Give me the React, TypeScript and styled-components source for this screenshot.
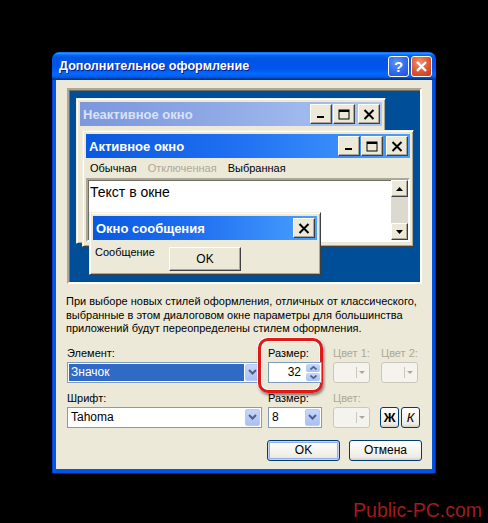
import styled, { createGlobalStyle, css } from "styled-components";

const GlobalStyle = createGlobalStyle`
  html, body {
    margin: 0;
    padding: 0;
    background: #000;
  }
  body {
    font-family: "Liberation Sans", Arial, sans-serif;
    font-size: 11px;
    color: #000;
  }
`;

function Chevron() {
  return (
    <svg width="9" height="6" viewBox="0 0 9 6">
      <path d="M1 1 L4.5 4.5 L8 1" fill="none" stroke="#4d6185" strokeWidth="2" />
    </svg>
  );
}

function Glyph({ kind }: { kind: "min" | "max" | "close" | "up" | "down" }) {
  if (kind === "min")
    return (
      <svg width="10" height="10" viewBox="0 0 10 10">
        <rect x="1" y="7" width="7" height="2" fill="#000" />
      </svg>
    );
  if (kind === "max")
    return (
      <svg width="12" height="11" viewBox="0 0 12 11">
        <rect x="1" y="1" width="10" height="9" fill="none" stroke="#000" strokeWidth="1" />
        <rect x="1" y="1" width="10" height="2" fill="#000" />
      </svg>
    );
  if (kind === "close")
    return (
      <svg width="12" height="11" viewBox="0 0 12 11">
        <path d="M1.5 1 L10.5 10 M10.5 1 L1.5 10" stroke="#000" strokeWidth="2" />
      </svg>
    );
  if (kind === "up")
    return (
      <svg width="7" height="4" viewBox="0 0 7 4">
        <path d="M0 4 L3.5 0 L7 4 Z" fill="#000" />
      </svg>
    );
  return (
    <svg width="7" height="4" viewBox="0 0 7 4">
      <path d="M0 0 L3.5 4 L7 0 Z" fill="#000" />
    </svg>
  );
}

export default function App() {
  return (
    <Page>
      <GlobalStyle />
      <Dialog>
        <TitleBar>
          <TitleText>Дополнительное оформление</TitleText>
          <TitleButtons>
            <HelpButton>?</HelpButton>
            <CloseButton>
              <svg width="13" height="13" viewBox="0 0 13 13">
                <path d="M2 2 L11 11 M11 2 L2 11" stroke="#fff" strokeWidth="2.4" />
              </svg>
            </CloseButton>
          </TitleButtons>
        </TitleBar>

        <Body>
          <Desk>
            <MiniWindow $left={7} $top={8} $width={310} $height={146}>
              <MiniTitle $active={false}>
                <span>Неактивное окно</span>
                <CapGroup>
                  <CapButton><Glyph kind="min" /></CapButton>
                  <CapButton><Glyph kind="max" /></CapButton>
                  <CapButton $gap><Glyph kind="close" /></CapButton>
                </CapGroup>
              </MiniTitle>
            </MiniWindow>

            <MiniWindow $left={13} $top={40} $width={332} $height={117}>
              <MiniTitle $active>
                <span>Активное окно</span>
                <CapGroup>
                  <CapButton><Glyph kind="min" /></CapButton>
                  <CapButton><Glyph kind="max" /></CapButton>
                  <CapButton $gap><Glyph kind="close" /></CapButton>
                </CapGroup>
              </MiniTitle>
              <MenuBar>
                <MenuItem>Обычная</MenuItem>
                <MenuItem $disabled>Отключенная</MenuItem>
                <MenuItem>Выбранная</MenuItem>
              </MenuBar>
              <TextPane>
                <PaneText>Текст в окне</PaneText>
                <ScrollBar>
                  <ScrollArrow><Glyph kind="up" /></ScrollArrow>
                  <ScrollArrow><Glyph kind="down" /></ScrollArrow>
                </ScrollBar>
              </TextPane>
            </MiniWindow>

            <MiniWindow $left={20} $top={122} $width={232} $height={63}>
              <MiniTitle $active>
                <span>Окно сообщения</span>
                <CapGroup>
                  <CapButton $gap><Glyph kind="close" /></CapButton>
                </CapGroup>
              </MiniTitle>
              <MessageBody>
                <span>Сообщение</span>
                <MiniOk>OK</MiniOk>
              </MessageBody>
            </MiniWindow>
          </Desk>

          <Note>
            При выборе новых стилей оформления, отличных от классического,
            <br />
            выбранные в этом диалоговом окне параметры для большинства
            <br />
            приложений будут переопределены стилем оформления.
          </Note>

          <FieldRow>
            <Field $w={195}>
              <Label>Элемент:</Label>
              <Combo>
                <ComboValue $selected>Значок</ComboValue>
                <ComboArrow><Chevron /></ComboArrow>
              </Combo>
            </Field>
            <Field $w={54} $ml={6}>
              <Highlight />
              <Label>Размер:</Label>
              <Combo>
                <SpinValue>32</SpinValue>
                <SpinArrows>
                  <SpinArrow>
                    <svg width="7" height="4" viewBox="0 0 7 4">
                      <path d="M0.5 3.5 L3.5 0.8 L6.5 3.5" fill="none" stroke="#4d6185" strokeWidth="1.6" />
                    </svg>
                  </SpinArrow>
                  <SpinArrow>
                    <svg width="7" height="4" viewBox="0 0 7 4">
                      <path d="M0.5 0.5 L3.5 3.2 L6.5 0.5" fill="none" stroke="#4d6185" strokeWidth="1.6" />
                    </svg>
                  </SpinArrow>
                </SpinArrows>
              </Combo>
            </Field>
            <Field $w={37} $ml={11}>
              <Label $disabled>Цвет 1:</Label>
              <ColorPick />
            </Field>
            <Field $w={37} $ml={11}>
              <Label $disabled>Цвет 2:</Label>
              <ColorPick />
            </Field>
          </FieldRow>

          <FieldRow $second>
            <Field $w={195}>
              <Label>Шрифт:</Label>
              <Combo>
                <ComboValue>Tahoma</ComboValue>
                <ComboArrow><Chevron /></ComboArrow>
              </Combo>
            </Field>
            <Field $w={54} $ml={6}>
              <Label>Размер:</Label>
              <Combo>
                <ComboValue>8</ComboValue>
                <ComboArrow><Chevron /></ComboArrow>
              </Combo>
            </Field>
            <Field $w={37} $ml={11}>
              <Label $disabled>Цвет:</Label>
              <ColorPick />
            </Field>
            <StyleButton $ml={10} $bold>Ж</StyleButton>
            <StyleButton $ml={2} $italic>К</StyleButton>
          </FieldRow>

          <ButtonRow>
            <PushButton $default>OK</PushButton>
            <PushButton>Отмена</PushButton>
          </ButtonRow>
        </Body>
      </Dialog>
      <Watermark>Public-PC.com</Watermark>
    </Page>
  );
}

const Page = styled.div`
  width: 488px;
  height: 523px;
  box-sizing: border-box;
  padding: 52px 0 0 52px;
  display: flex;
  flex-direction: column;
  overflow: hidden;
  background: #000;
`;

const Dialog = styled.div`
  width: 384px;
  box-sizing: border-box;
  background: linear-gradient(to right, #0019b8 0, #0a5ae6 1px, #0055e5 4px, #0055e5 calc(100% - 4px), #0a48d0 calc(100% - 1px), #00138c 100%);
  border-radius: 8px 8px 0 0;
  border-bottom: 1px solid #00138c;
  display: flex;
  flex-direction: column;
`;

const TitleBar = styled.div`
  height: 28px;
  display: flex;
  align-items: center;
  justify-content: space-between;
  padding: 0 4px 0 7px;
  border-radius: 8px 8px 0 0;
  background: linear-gradient(
    to bottom,
    #0058ee 0%,
    #3593ff 4%,
    #288eff 6%,
    #127dff 8%,
    #036ffc 10%,
    #0262ee 14%,
    #0057e5 20%,
    #0054e3 24%,
    #0055eb 56%,
    #005bf5 66%,
    #026afe 76%,
    #0062ef 86%,
    #0052d6 92%,
    #0040ab 94%,
    #003092 100%
  );
`;

const TitleText = styled.span`
  color: #fff;
  font-weight: bold;
  font-size: 12.6px;
  text-shadow: 1px 1px #0a1883;
`;

const TitleButtons = styled.div`
  display: flex;
  gap: 2px;
`;

const capBase = css`
  width: 21px;
  height: 21px;
  box-sizing: border-box;
  border: 1px solid #fff;
  border-radius: 3px;
  display: flex;
  align-items: center;
  justify-content: center;
`;

const HelpButton = styled.div`
  ${capBase};
  background: radial-gradient(circle at 40% 30%, #5d94ff 0%, #2f6bf0 55%, #1f4fd0 100%);
  color: #fff;
  font-weight: bold;
  font-size: 15px;
  line-height: 1;
`;

const CloseButton = styled.div`
  ${capBase};
  background: radial-gradient(circle at 40% 30%, #f09576 0%, #e0552f 55%, #c53a18 100%);
`;

const Body = styled.div`
  margin: 0 4px 4px 4px;
  background: #ece9d8;
  padding: 8px 10px 8px 11px;
  display: flex;
  flex-direction: column;
`;

const Desk = styled.div`
  position: relative;
  height: 196px;
  box-sizing: border-box;
  background: #004e98;
  border: 2px solid;
  border-color: #aca899 #fff #fff #aca899;
  box-shadow: inset 1px 1px #716f64;
  overflow: hidden;
`;

const MiniWindow = styled.div<{ $left: number; $top: number; $width: number; $height: number }>`
  position: absolute;
  left: ${(p) => p.$left}px;
  top: ${(p) => p.$top}px;
  width: ${(p) => p.$width}px;
  height: ${(p) => p.$height}px;
  box-sizing: border-box;
  background: #ece9d8;
  border: 1px solid;
  border-color: #f1efe2 #404040 #404040 #f1efe2;
  box-shadow: inset 1px 1px #fff, inset -1px -1px #aca899;
  padding: 3px;
  display: flex;
  flex-direction: column;
`;

const MiniTitle = styled.div<{ $active: boolean }>`
  height: 24px;
  flex: none;
  display: flex;
  align-items: center;
  justify-content: space-between;
  padding-left: 3px;
  font-weight: bold;
  font-size: 13px;
  color: ${(p) => (p.$active ? "#fff" : "#d8e2f7")};
  background: ${(p) =>
    p.$active
      ? "linear-gradient(to right, #0a58e0 0%, #1f6ff0 45%, #4aa0ff 100%)"
      : "linear-gradient(to right, #7c97dd 0%, #8fa9e6 45%, #aec6f3 100%)"};
`;

const CapGroup = styled.div`
  display: flex;
  gap: 1px;
  padding-right: 2px;
`;

const CapButton = styled.div<{ $gap?: boolean }>`
  width: 22px;
  height: 20px;
  box-sizing: border-box;
  margin-left: ${(p) => (p.$gap ? "2px" : "0")};
  background: #ece9d8;
  border: 1px solid;
  border-color: #fff #404040 #404040 #fff;
  box-shadow: inset -1px -1px #aca899;
  display: flex;
  align-items: center;
  justify-content: center;
`;

const MenuBar = styled.div`
  height: 20px;
  flex: none;
  display: flex;
  align-items: center;
  gap: 11px;
  padding-left: 4px;
`;

const MenuItem = styled.span<{ $disabled?: boolean }>`
  color: ${(p) => (p.$disabled ? "#aca899" : "#000")};
`;

const TextPane = styled.div`
  flex: 1;
  display: flex;
  background: #fff;
  border: 2px solid;
  border-color: #aca899 #fff #fff #aca899;
  box-shadow: inset 1px 1px #716f64;
  margin-bottom: 1px;
`;

const PaneText = styled.div`
  flex: 1;
  padding: 4px 0 0 2px;
  font-size: 14px;
`;

const ScrollBar = styled.div`
  width: 17px;
  background: #dcd9d0;
  display: flex;
  flex-direction: column;
  justify-content: space-between;
`;

const ScrollArrow = styled.div`
  height: 17px;
  box-sizing: border-box;
  background: #ece9d8;
  border: 1px solid;
  border-color: #fff #404040 #404040 #fff;
  box-shadow: inset -1px -1px #aca899;
  display: flex;
  align-items: center;
  justify-content: center;
`;

const MessageBody = styled.div`
  flex: 1;
  display: grid;
  grid-template-columns: 76px 72px;
  align-items: start;
  padding: 6px 0 0 2px;
`;

const MiniOk = styled.div`
  margin: 1px 0 0 -2px;
  width: 72px;
  height: 24px;
  box-sizing: border-box;
  display: flex;
  align-items: center;
  justify-content: center;
  background: #ece9d8;
  border: 1px solid;
  border-color: #fff #404040 #404040 #fff;
  box-shadow: inset -1px -1px #aca899;
  font-size: 12px;
`;

const Note = styled.p`
  margin: 11px 0 0 -1px;
  line-height: 13.5px;
  white-space: nowrap;
`;

const FieldRow = styled.div<{ $second?: boolean }>`
  display: flex;
  align-items: flex-end;
  margin-top: ${(p) => (p.$second ? "7px" : "9px")};
`;

const Field = styled.div<{ $w: number; $ml?: number }>`
  position: relative;
  width: ${(p) => p.$w}px;
  margin-left: ${(p) => p.$ml ?? 0}px;
  display: flex;
  flex-direction: column;
`;

const Label = styled.div<{ $disabled?: boolean }>`
  position: relative;
  height: 16px;
  line-height: 16px;
  margin-bottom: 1px;
  color: ${(p) => (p.$disabled ? "#aca899" : "#000")};
`;

const Highlight = styled.div`
  position: absolute;
  left: -10px;
  right: -1px;
  top: -7px;
  bottom: -10px;
  border: 3px solid #e01818;
  border-radius: 10px;
  box-shadow: inset 0 0 0 1px #fff, 1px 2px 3px rgba(0, 0, 0, 0.55), 0 0 0 1px #fff;
`;

const Combo = styled.div`
  position: relative;
  height: 21px;
  box-sizing: border-box;
  border: 1px solid #7f9db9;
  background: #fff;
  display: flex;
  align-items: stretch;
  padding: 1px;
`;

const ComboValue = styled.div<{ $selected?: boolean }>`
  flex: 1;
  display: flex;
  align-items: center;
  padding-left: 2px;
  font-size: 12px;
  color: ${(p) => (p.$selected ? "#fff" : "#000")};
  background: ${(p) => (p.$selected ? "#316ac5" : "transparent")};
  margin-right: 1px;
`;

const ComboArrow = styled.div`
  width: 15px;
  box-sizing: border-box;
  border-radius: 2px;
  background: linear-gradient(to bottom, #c6d6fc 0%, #b4c9f8 60%, #a9c0f4 100%);
  border: 1px solid #b6caf5;
  display: flex;
  align-items: center;
  justify-content: center;
`;

const SpinValue = styled.div`
  flex: 1;
  display: flex;
  align-items: center;
  justify-content: flex-end;
  padding-right: 5px;
  font-size: 12px;
`;

const SpinArrows = styled.div`
  width: 14px;
  display: flex;
  flex-direction: column;
  gap: 1px;
`;

const SpinArrow = styled.div`
  flex: 1;
  border-radius: 2px;
  background: linear-gradient(to bottom, #c6d6fc, #aac1f4);
  display: flex;
  align-items: center;
  justify-content: center;
`;

const ColorPick = styled.div`
  position: relative;
  height: 21px;
  box-sizing: border-box;
  border: 1px solid #cac8bb;
  border-radius: 3px;
  background: #f4f3ee;

  &::before {
    content: "";
    position: absolute;
    right: 12px;
    top: 4px;
    bottom: 4px;
    width: 1px;
    background: #cac8bb;
  }
  &::after {
    content: "";
    position: absolute;
    right: 4px;
    top: 8px;
    border-left: 3px solid transparent;
    border-right: 3px solid transparent;
    border-top: 3px solid #aca899;
  }
`;

const xpButton = css`
  box-sizing: border-box;
  border: 1px solid #003c74;
  border-radius: 3px;
  background: linear-gradient(to bottom, #ffffff 0%, #f3f2ec 60%, #ecebe4 85%, #d6d0c5 100%);
  display: flex;
  align-items: center;
  justify-content: center;
`;

const StyleButton = styled.div<{ $ml: number; $bold?: boolean; $italic?: boolean }>`
  ${xpButton};
  width: 19px;
  height: 21px;
  margin-left: ${(p) => p.$ml}px;
  font-size: 13px;
  font-weight: ${(p) => (p.$bold ? "bold" : "normal")};
  font-style: ${(p) => (p.$italic ? "italic" : "normal")};
`;

const ButtonRow = styled.div`
  display: flex;
  justify-content: flex-end;
  gap: 9px;
  margin-top: 12px;
`;

const PushButton = styled.div<{ $default?: boolean }>`
  ${xpButton};
  width: 73px;
  height: 21px;
  font-size: 12px;
  box-shadow: ${(p) => (p.$default ? "inset 0 0 0 1px #c5d5fc, inset 0 0 0 2px #97aee2" : "none")};
`;

const Watermark = styled.div`
  align-self: flex-end;
  margin: 27px 6px 0 0;
  font-family: "Liberation Sans", Arial, sans-serif;
  font-size: 19.5px;
  line-height: 1;
  color: #a11c1c;
`;
